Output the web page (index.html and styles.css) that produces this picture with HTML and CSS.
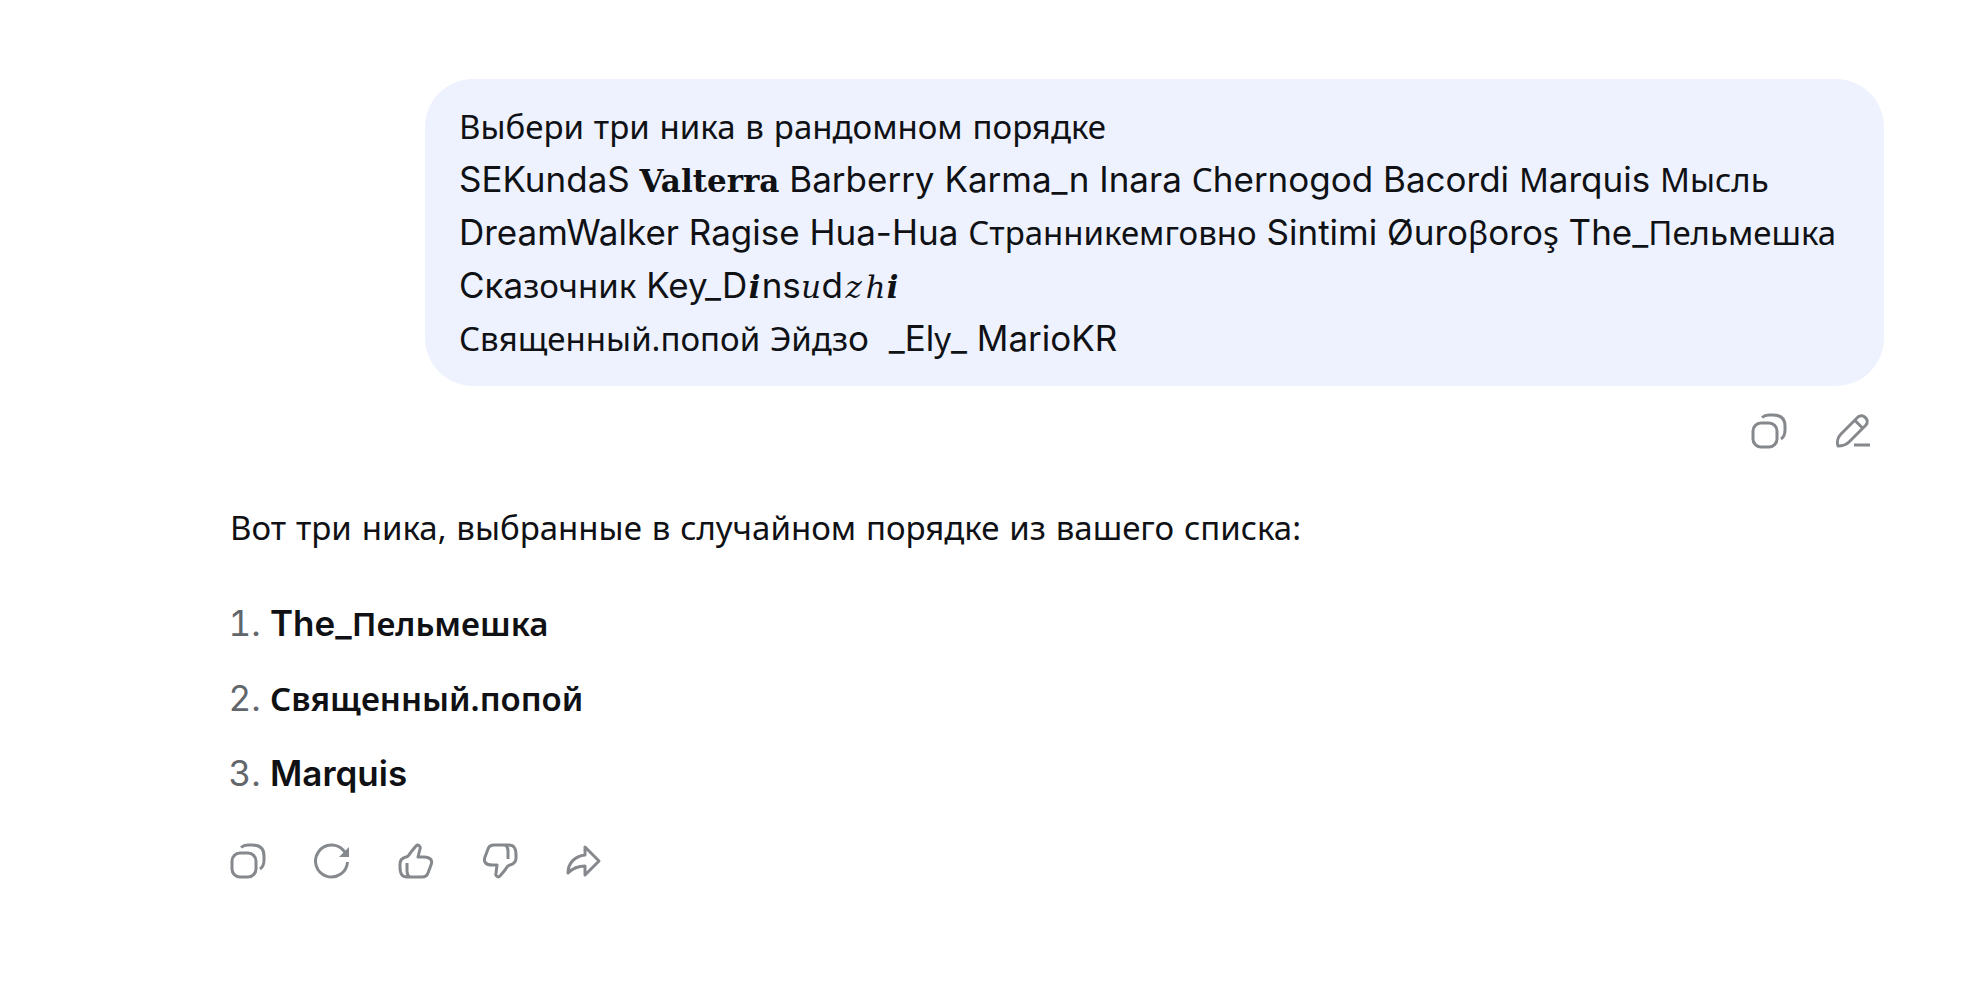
FILE: index.html
```
<!DOCTYPE html>
<html lang="ru">
<head>
    <meta charset="UTF-8">
    <meta name="viewport" content="width=device-width, initial-scale=1.0">
    <title>Чат</title>
    <link rel="stylesheet" href="styles.css">
</head>
<body>
    <main class="thread">
        <section class="message user">
            <div class="bubble"><span class="cyr">Выбери</span> <span class="cyr">три</span> <span class="cyr">ника</span> <span class="cyr">в</span> <span class="cyr">рандомном</span> <span class="cyr">порядке</span>
SEKundaS <b class="serif">Valterra</b> Barberry Karma_n Inara <span class="cyr">С</span>hernogod Bacordi <span class="cyr">М</span>arquis <span class="cyr">Мысль</span> DreamWalker Ragise Hua-Hua <span class="cyr">Странникемговно</span> Sintimi Øuro<span class="cyr">β</span>oro<span class="cyr">ş</span> The_<span class="cyr">Пельмешка</span> Ска<span class="cyr">зочник</span> Key_D<span class="math">𝒊</span>ns<span class="math">𝑢</span>d<span class="math">𝑧ℎ𝒊</span>
<span class="cyr">Священный.попой</span> <span class="cyr">Эйдз</span>о  _El<span class="cyr">у</span>_ MarioKR</div>
            <div class="actions">
                <button type="button" aria-label="Копировать">
                    <svg viewBox="0 0 36 36"><rect x="2" y="10" width="24" height="24" rx="8"/><path d="M11 4.500C13 2.700 15 2 18 2h4c8 0 12 4 12 11v4c0 4-1 7-4 9"/></svg>
                </button>
                <button type="button" aria-label="Изменить">
                    <svg viewBox="0 0 36 36"><path d="M3 33c-1.500-4 0-9 3-12L23 4c5-4 12 3 8 8L14 29c-3 3-7 4-11 4zM20 7.500l7.500 7.500M19 32h16"/></svg>
                </button>
            </div>
        </section>

        <section class="message reply">
            <p><span class="cyr">Вот</span> <span class="cyr">три</span> <span class="cyr">ника,</span> <span class="cyr">выбранные</span> <span class="cyr">в</span> <span class="cyr">случайном</span> <span class="cyr">порядке</span> <span class="cyr">из</span> <span class="cyr">вашего</span> <span class="cyr">списка:</span></p>
            <ol>
                <li><strong>The_<span class="cyr">Пельмешка</span></strong></li>
                <li><strong class="cyr">Священный.попой</strong></li>
                <li><strong>Marquis</strong></li>
            </ol>
            <div class="actions">
                <button type="button" aria-label="Копировать">
                    <svg viewBox="0 0 36 36"><rect x="2" y="10" width="24" height="24" rx="8"/><path d="M11 4.500C13 2.700 15 2 18 2h4c8 0 12 4 12 11v4c0 4-1 7-4 9"/></svg>
                </button>
                <button type="button" aria-label="Повторить">
                    <svg viewBox="0 0 36 36"><path d="M33.500 19A16 16 0 1 1 30 8l2 3"/><path class="fill" d="M35 4v10H25z"/></svg>
                </button>
                <button type="button" aria-label="Нравится">
                    <svg viewBox="0 0 36 36"><path d="M2 24v-3c0-4 2-6 6-7 2 0 3-2 5-5l5-6c2-2 5 0 4 3l-2 8h6c6 0 9 3 7 8l-3 8c-1 3-3 4-6 4H9c-5 0-7-3-7-10zM9 20v8c0 3 1 5 3 6"/></svg>
                </button>
                <button type="button" aria-label="Не нравится">
                    <svg viewBox="0 0 36 36"><path d="M34 12v3c0 4-2 6-6 7-2 0-3 2-5 5l-5 6c-2 2-5 0-4-3l1-8h-5c-6 0-9-3-7-8l3-8c1-3 3-4 6-4h15c5 0 7 3 7 10zM26 16V8c0-3-1-5-3-6"/></svg>
                </button>
                <button type="button" aria-label="Поделиться">
                    <svg viewBox="0 0 36 36"><path d="M19 4l14 14-14 14v-9c-7 0-12 2-17 7 0-10 7-17 17-18z"/></svg>
                </button>
            </div>
        </section>
    </main>
</body>
</html>
```
FILE: styles.css
```
* {
    box-sizing: border-box;
}

body {
    margin: 0;
    background: #fff;
    color: #0f1115;
    font-family: Inter, "Noto Sans", sans-serif;
    font-size: 35px;
    line-height: 53px;
}

.thread {
    padding: 79px 85px 79px 230px;
}

.user {
    display: flex;
    flex-direction: column;
    align-items: flex-end;
    padding-left: 195px;
}

.bubble {
    padding: 21px 34px;
    border-radius: 48px;
    background: #edf2fe;
    white-space: pre-wrap;
}

.cyr {
    font-family: "Noto Sans", sans-serif;
    font-size: 33px;
    line-height: 1;
}

.serif {
    font-family: "DejaVu Serif", serif;
    font-size: 31px;
    line-height: 1;
}

.math {
    font-family: "DejaVu Math TeX Gyre", "DejaVu Serif", serif;
    font-size: 31px;
    line-height: 1;
}

.actions {
    display: flex;
    gap: 48px;
}

.user .actions {
    padding: 27px 13px 0 0;
}

.actions button {
    width: 36px;
    height: 36px;
    padding: 0;
    border: none;
    background: none;
    cursor: pointer;
}

.actions svg {
    display: block;
    width: 36px;
    height: 36px;
    fill: none;
    stroke: #85888c;
    stroke-width: 3;
    stroke-linejoin: round;
}

.actions .fill {
    fill: #85888c;
    stroke: none;
}

.reply {
    padding-top: 52px;
}

.reply p {
    margin: 0 0 43px;
}

.reply ol {
    display: flex;
    flex-direction: column;
    gap: 22px;
    margin: 0 0 43px;
    padding-left: 40px;
}

.reply li::marker {
    color: #61666b;
}

.reply strong {
    font-weight: 600;
}
```
